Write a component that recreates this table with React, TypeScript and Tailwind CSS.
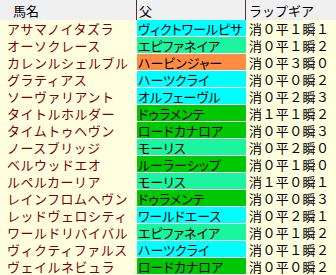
import React from 'react';

type Row = { name: string; sire: string; color: string; gear: string };

const CYAN = 'bg-[#00ffff]';
const SPRING = 'bg-[#1cf5a0]';
const GREEN = 'bg-[#00c800]';
const ORANGE = 'bg-[#ff8c42]';

const rows: Row[] = [
  { name: 'アサマノイタズラ', sire: 'ヴィクトワールピサ', color: CYAN, gear: '消０平１瞬１' },
  { name: 'オーソクレース', sire: 'エピファネイア', color: SPRING, gear: '消０平１瞬２' },
  { name: 'カレンルシェルブル', sire: 'ハービンジャー', color: ORANGE, gear: '消０平３瞬０' },
  { name: 'グラティアス', sire: 'ハーツクライ', color: CYAN, gear: '消０平０瞬２' },
  { name: 'ソーヴァリアント', sire: 'オルフェーヴル', color: CYAN, gear: '消０平２瞬３' },
  { name: 'タイトルホルダー', sire: 'ドゥラメンテ', color: GREEN, gear: '消１平１瞬２' },
  { name: 'タイムトゥヘヴン', sire: 'ロードカナロア', color: GREEN, gear: '消０平０瞬３' },
  { name: 'ノースブリッジ', sire: 'モーリス', color: SPRING, gear: '消０平２瞬０' },
  { name: 'ベルウッドエオ', sire: 'ルーラーシップ', color: GREEN, gear: '消０平１瞬０' },
  { name: 'ルペルカーリア', sire: 'モーリス', color: SPRING, gear: '消１平０瞬１' },
  { name: 'レインフロムヘヴン', sire: 'ドゥラメンテ', color: GREEN, gear: '消０平０瞬３' },
  { name: 'レッドヴェロシティ', sire: 'ワールドエース', color: CYAN, gear: '消０平２瞬１' },
  { name: 'ワールドリバイバル', sire: 'エピファネイア', color: SPRING, gear: '消０平１瞬２' },
  { name: 'ヴィクティファルス', sire: 'ハーツクライ', color: CYAN, gear: '消０平１瞬２' },
  { name: 'ヴェイルネビュラ', sire: 'ロードカナロア', color: GREEN, gear: '消０平０瞬２' },
];

const App = () => {
  return (
    <div className="w-[336px] h-[275px] overflow-hidden bg-[#ffffe0] font-['Noto_Sans_CJK_JP',sans-serif] text-[13px] leading-none">
      <div className="grid grid-cols-[137px_109px_90px]">
        {/* header */}
        <div className="h-[20px] flex items-center bg-[#f0f0f0] border-r border-[#3c3c3c] pl-[13px] pt-[1px] text-black">
          馬名
        </div>
        <div className="h-[20px] flex items-center bg-[#f0f0f0] border-r border-[#3c3c3c] pl-[2px] pt-[1px] text-black">
          父
        </div>
        <div className="h-[20px] flex items-center bg-[#f0f0f0] pl-[3px] pt-[1px] text-black">ラップギア</div>

        {rows.map((r) => (
          <React.Fragment key={r.name}>
            <div className="h-[17px] flex items-center pl-[7px] tracking-[0.5px] text-[#800000] whitespace-nowrap">
              {r.name}
            </div>
            <div
              className={`h-[17px] flex items-center border-b border-white pl-[1px] text-black whitespace-nowrap [font-feature-settings:'palt'] ${r.color}`}
            >
              {r.sire}
            </div>
            <div className="h-[17px] flex items-center pl-[3px] tracking-[0.4px] text-black whitespace-nowrap">
              {r.gear}
            </div>
          </React.Fragment>
        ))}
      </div>
    </div>
  );
};

export default App;
